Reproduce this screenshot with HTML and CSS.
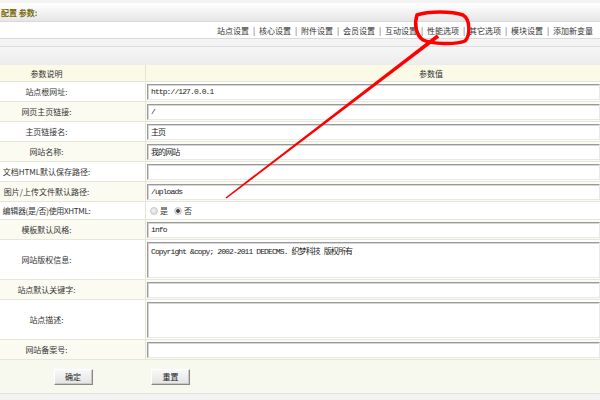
FILE: index.html
```html
<!DOCTYPE html>
<html lang="zh-CN">
<head>
  <meta charset="UTF-8" />
  <title>系统配置参数</title>
  <link rel="stylesheet" href="styles.css">
</head>
<body>
  <div class="title-bar"><span class="title">配置 参数:</span></div>

  <div class="nav-bar">
    <nav class="tabs">
      <a href="#">站点设置</a><span class="sep">|</span>
      <a href="#">核心设置</a><span class="sep">|</span>
      <a href="#">附件设置</a><span class="sep">|</span>
      <a href="#">会员设置</a><span class="sep">|</span>
      <a href="#">互动设置</a><span class="sep">|</span>
      <a href="#">性能选项</a><span class="sep">|</span>
      <a href="#">其它选项</a><span class="sep">|</span>
      <a href="#">模块设置</a><span class="sep">|</span>
      <a href="#">添加新变量</a>
    </nav>
  </div>
  <div class="strip"></div>
  <div class="subbar"></div>

  <form class="config">
    <div class="row head">
      <div class="label">参数说明</div>
      <div class="value value-head">参数值</div>
    </div>
    <div class="row">
      <div class="label">站点根网址:</div>
      <div class="value"><input class="text" type="text" value="http://127.0.0.1"></div>
    </div>
    <div class="row odd">
      <div class="label">网页主页链接:</div>
      <div class="value"><input class="text" type="text" value="/"></div>
    </div>
    <div class="row">
      <div class="label">主页链接名:</div>
      <div class="value"><input class="text" type="text" value="主页"></div>
    </div>
    <div class="row odd">
      <div class="label">网站名称:</div>
      <div class="value"><input class="text" type="text" value="我的网站"></div>
    </div>
    <div class="row">
      <div class="label">文档HTML默认保存路径:</div>
      <div class="value"><input class="text" type="text" value=""></div>
    </div>
    <div class="row odd">
      <div class="label">图片/上传文件默认路径:</div>
      <div class="value"><input class="text" type="text" value="/uploads"></div>
    </div>
    <div class="row short">
      <div class="label narrow">编辑器(是/否)使用XHTML:</div>
      <div class="value radios">
        <label><input class="radio" type="radio" name="xhtml">是</label>
        <label><input class="radio" type="radio" name="xhtml" checked>否</label>
      </div>
    </div>
    <div class="row odd">
      <div class="label">模板默认风格:</div>
      <div class="value"><input class="text" type="text" value="info"></div>
    </div>
    <div class="row tall">
      <div class="label">网站版权信息:</div>
      <div class="value"><textarea class="area">Copyright &amp;copy; 2002-2011 DEDECMS. 织梦科技 版权所有</textarea></div>
    </div>
    <div class="row odd">
      <div class="label">站点默认关键字:</div>
      <div class="value"><input class="text" type="text" value=""></div>
    </div>
    <div class="row tall">
      <div class="label">站点描述:</div>
      <div class="value"><textarea class="area"></textarea></div>
    </div>
    <div class="row odd">
      <div class="label">网站备案号:</div>
      <div class="value"><input class="text" type="text" value=""></div>
    </div>
    <div class="btn-row">
      <div class="btn-cell"><button type="button" class="btn">确定</button></div>
      <div class="btn-cell2"><button type="reset" class="btn">重置</button></div>
    </div>
  </form>

  <!-- red hand-drawn markup on top of the screenshot -->
  <svg class="markup" width="600" height="400" viewBox="0 0 600 400">
    <path d="M417,15 C428,11 452,11 463,15 C471,20 470,36 465,41 C455,45 432,44 423,40 C416,35 414,24 417,15" fill="none" stroke="#f00" stroke-width="3.5" stroke-linecap="round"/>
    <polygon points="439.2,37.6 436.8,34.4 225.5,197.4 226.5,198.6" fill="#f00"/>
  </svg>
</body>
</html>
```

FILE: styles.css
```css
* { margin: 0; padding: 0; box-sizing: border-box; }
body {
  width: 600px;
  height: 400px;
  overflow: hidden;
  position: relative;
  padding-top: 3px;
  background: #f3f3f3;
  font-family: "Noto Sans CJK SC", sans-serif;
  font-size: 8px;
  color: #333;
}

.title-bar {
  height: 19px;
  background: linear-gradient(#ffffff, #e6e6e6);
  border-bottom: 1px solid #d9d9d9;
  display: flex;
  align-items: center;
}
.title {
  margin-left: 1px;
  font-weight: bold;
  color: #7a6c08;
  white-space: pre;
}

.nav-bar {
  height: 17px;
  background: #fff;
  border-bottom: 1px solid #dadada;
  display: flex;
  justify-content: flex-end;
  align-items: center;
  padding-right: 7px;
}
.tabs { display: flex; align-items: center; }
.tabs a { color: #333; text-decoration: none; }
.tabs a:hover { color: #c00; }
.tabs .sep { width: 10px; text-align: center; color: #555; }

.strip {
  height: 8px;
  background: #f4f4f4;
  border-bottom: 1px solid #dcdcdc;
}
.subbar {
  height: 18px;
  background: linear-gradient(#f6f6f6, #ececec);
}

.config { background: #fff; }
.row {
  display: flex;
  height: 20px;
  border-bottom: 1px solid #e6e6da;
  background: #fff;
}
.row.odd { background: #fbfbf2; }
.row.head { height: 17px; background: #fafae6; }
.row.short { height: 18px; }
.row.tall { height: 40px; }

.label {
  width: 146px;
  flex-shrink: 0;
  border-right: 1px solid #e3e3d6;
  display: flex;
  align-items: center;
  justify-content: center;
  padding-right: 52px;
  white-space: nowrap;
}
.label.narrow { letter-spacing: -0.3px; }
.value {
  flex: 1;
  display: flex;
  align-items: center;
  padding-left: 1px;
  overflow: hidden;
}
.value-head { justify-content: center; padding-left: 116px; }

.text, .area {
  width: calc(100% + 10px);
  border: 1px solid;
  border-color: #999 #e8e8e8 #e8e8e8 #999;
  box-shadow: inset 1px 1px 0 #d6d6d6;
  background: #fff;
  font-family: "Liberation Mono", "Noto Sans CJK SC", monospace;
  font-size: 8px;
  letter-spacing: -0.9px;
  color: #222;
  outline: none;
}
.text { height: 16px; padding: 0 3px; }
.area { height: 36px; padding: 4px 3px; resize: none; line-height: 10px; }

.radios { gap: 6px; padding-left: 4px; }
.radios label { display: flex; align-items: center; gap: 2px; }
.radio {
  appearance: none;
  width: 8px;
  height: 8px;
  border-radius: 50%;
  border: 1px solid #c8c8c8;
  background: radial-gradient(circle at 40% 40%, #f4f4f4, #cfcfcf);
}
.radio:checked {
  background: radial-gradient(circle, #444 0, #444 1.5px, #e0e0e0 2.2px, #c8c8c8 100%);
}

.btn-row {
  height: 34px;
  display: flex;
  align-items: center;
  background: #f8f9ee;
  border-bottom: 1px solid #e0e0e0;
}
.btn-cell { width: 146px; display: flex; justify-content: center; }
.btn-cell2 { padding-left: 5px; }
.btn {
  width: 39px;
  height: 16px;
  border: 1px solid;
  border-color: #fff #888 #888 #fff;
  box-shadow: inset -1px -1px 0 #c8c8c8;
  background: linear-gradient(#f8f8f8, #e4e4e4);
  font-family: "Noto Sans CJK SC", sans-serif;
  font-size: 8px;
  color: #222;
  cursor: pointer;
}

.markup {
  position: absolute;
  left: 0;
  top: 0;
  pointer-events: none;
}
```
